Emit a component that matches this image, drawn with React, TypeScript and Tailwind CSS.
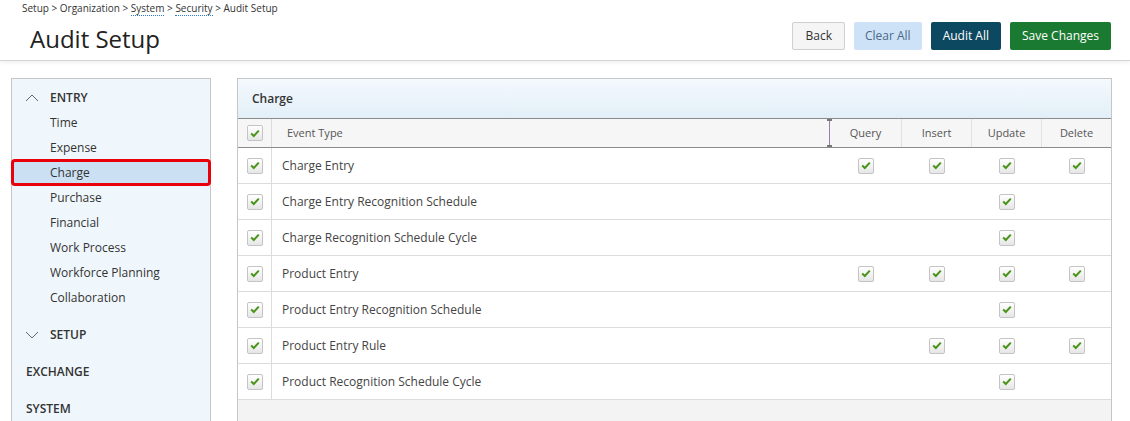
import React from "react";

const Check = ({ size = 16 }: { size?: number }) => (
  <span
    className="inline-flex items-center justify-center rounded-[2px] border border-[#c4c4c4] bg-gradient-to-b from-[#ffffff] to-[#e6e6e6]"
    style={{ width: size, height: size }}
  >
    <svg width="10" height="9" viewBox="0 0 10 9">
      <path d="M1.2 4.6 L3.8 7 L8.8 1.6" fill="none" stroke="#4a9419" strokeWidth="2" />
    </svg>
  </span>
);

const rows: { name: string; q?: boolean; i?: boolean; u?: boolean; d?: boolean }[] = [
  { name: "Charge Entry", q: true, i: true, u: true, d: true },
  { name: "Charge Entry Recognition Schedule", u: true },
  { name: "Charge Recognition Schedule Cycle", u: true },
  { name: "Product Entry", q: true, i: true, u: true, d: true },
  { name: "Product Entry Recognition Schedule", u: true },
  { name: "Product Entry Rule", i: true, u: true, d: true },
  { name: "Product Recognition Schedule Cycle", u: true },
];

const entryItems = [
  "Time",
  "Expense",
  "Charge",
  "Purchase",
  "Financial",
  "Work Process",
  "Workforce Planning",
  "Collaboration",
];

export default function App() {
  return (
    <div
      className="w-[1130px] h-[421px] overflow-hidden bg-white text-[#333]"
      style={{ fontFamily: '"Open Sans", "Noto Sans", sans-serif' }}
    >
      {/* Header */}
      <div className="relative h-[61px] border-b border-[#d4d4d4] shadow-[0_2px_4px_rgba(0,0,0,0.06)] flex justify-between">
        <div>
          <div className="pl-[22px] pt-[1px] text-[10px] leading-[14px] text-[#333]">
            Setup &gt; Organization &gt;{" "}
            <span className="border-b border-dotted border-[#2a7bd0]">System</span> &gt;{" "}
            <span className="border-b border-dotted border-[#2a7bd0]">Security</span> &gt; Audit Setup
          </div>
          <div className="pl-[30px] pt-[9px] text-[24px] leading-[30px] text-[#222]">Audit Setup</div>
        </div>
        <div className="flex gap-[9px] pt-[22px] pr-[19px] text-[12px]">
          <button className="h-[28px] px-[12px] rounded-[2px] border border-[#cfcfcf] bg-[#f5f5f5] text-[#333]">
            Back
          </button>
          <button className="h-[28px] px-[11px] rounded-[2px] bg-[#cde2f6] text-[#4a6a8a]">Clear All</button>
          <button className="h-[28px] px-[12px] rounded-[2px] bg-[#0d4861] text-white">Audit All</button>
          <button className="h-[28px] px-[12px] rounded-[2px] bg-[#1b7a31] text-white">Save Changes</button>
        </div>
      </div>

      <div className="flex pt-[17px]">
        {/* Sidebar */}
        <div className="ml-[11px] w-[200px] h-[360px] border border-[#c6c6c6] bg-[#f0f7fc] pt-[6px] text-[12px] text-[#333]">
          <div className="h-[25px] flex items-center pl-[13px] font-semibold">
            <svg width="14" height="8" viewBox="0 0 14 8" className="mr-[11px]">
              <path d="M1 7 L7 1 L13 7" fill="none" stroke="#666" strokeWidth="1" />
            </svg>
            ENTRY
          </div>
          {entryItems.map((it) =>
            it === "Charge" ? (
              <div
                key={it}
                className="-mx-[1px] h-[27px] -my-[1px] flex items-center pl-[36px] rounded-[4px] border-[3px] border-[#e8000b] bg-[#cce0f4] relative z-10"
              >
                {it}
              </div>
            ) : (
              <div key={it} className="h-[25px] flex items-center pl-[38px]">
                {it}
              </div>
            )
          )}
          <div className="mt-[12px] h-[25px] flex items-center pl-[13px] font-semibold">
            <svg width="14" height="8" viewBox="0 0 14 8" className="mr-[11px]">
              <path d="M1 1 L7 7 L13 1" fill="none" stroke="#666" strokeWidth="1" />
            </svg>
            SETUP
          </div>
          <div className="mt-[12px] h-[25px] flex items-center pl-[14px] font-semibold">EXCHANGE</div>
          <div className="mt-[12px] h-[25px] flex items-center pl-[14px] font-semibold">SYSTEM</div>
        </div>

        {/* Main panel */}
        <div className="ml-[26px] w-[875px] h-[360px] border border-[#c6c6c6] bg-[#f3f3f3]">
          <div className="h-[40px] border-b border-[#8c8c8c] bg-gradient-to-b from-[#f4f9fd] to-[#e2eff8] flex items-center pl-[14px] text-[12px] font-semibold text-[#333]">
            Charge
          </div>
          <div className="grid grid-cols-[34px_1fr_72px_70px_70px_69px] h-[29px] border-b border-[#8c8c8c] bg-[#f6f6f6] text-[11px] text-[#555]">
            <div className="flex items-center justify-center border-r border-[#dcdcdc]">
              <Check />
            </div>
            <div className="relative flex items-center pl-[15px]">
              Event Type
              <div className="absolute right-0 top-0 bottom-0 w-[1px] bg-[#9a7fae]" />
              <div className="absolute right-[-2px] top-0 w-[5px] h-[2px] bg-[#777]" />
              <div className="absolute right-[-2px] bottom-0 w-[5px] h-[2px] bg-[#777]" />
            </div>
            <div className="flex items-center justify-center border-r border-[#e2e2e2]">Query</div>
            <div className="flex items-center justify-center border-r border-[#e2e2e2]">Insert</div>
            <div className="flex items-center justify-center border-r border-[#e2e2e2]">Update</div>
            <div className="flex items-center justify-center">Delete</div>
          </div>
          {rows.map((r) => (
            <div
              key={r.name}
              className="grid grid-cols-[34px_1fr_72px_70px_70px_69px] h-[36px] border-b border-[#dcdcdc] bg-white text-[12px] text-[#444]"
            >
              <div className="flex items-center justify-center border-r border-[#dcdcdc]">
                <Check />
              </div>
              <div className="flex items-center pl-[10px]">{r.name}</div>
              <div className="flex items-center justify-center">{r.q && <Check />}</div>
              <div className="flex items-center justify-center">{r.i && <Check />}</div>
              <div className="flex items-center justify-center">{r.u && <Check />}</div>
              <div className="flex items-center justify-center">{r.d && <Check />}</div>
            </div>
          ))}
        </div>
      </div>
    </div>
  );
}
